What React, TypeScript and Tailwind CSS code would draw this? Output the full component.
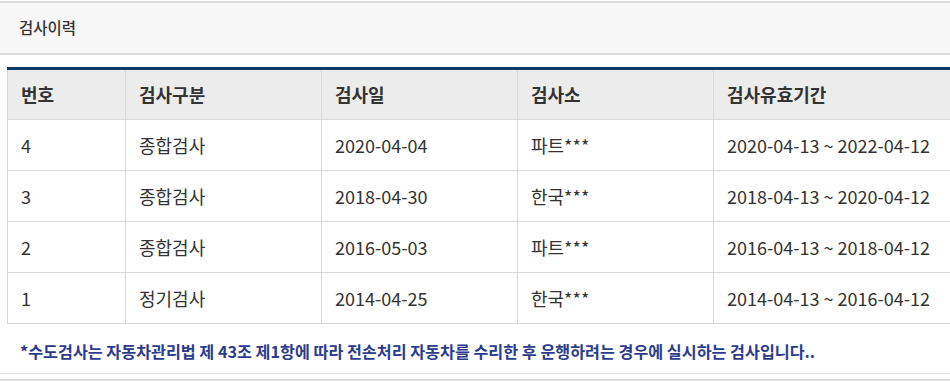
import React from 'react';

const rows = [
  { no: '4', type: '종합검사', date: '2020-04-04', place: '파트***', period: '2020-04-13 ~ 2022-04-12' },
  { no: '3', type: '종합검사', date: '2018-04-30', place: '한국***', period: '2018-04-13 ~ 2020-04-12' },
  { no: '2', type: '종합검사', date: '2016-05-03', place: '파트***', period: '2016-04-13 ~ 2018-04-12' },
  { no: '1', type: '정기검사', date: '2014-04-25', place: '한국***', period: '2014-04-13 ~ 2016-04-12' },
];

const headers = ['번호', '검사구분', '검사일', '검사소', '검사유효기간'];
const widths = ['w-[118px]', 'w-[196px]', 'w-[196px]', 'w-[196px]', ''];

export default function App() {
  return (
    <div
      className="w-[950px] h-[381px] overflow-hidden bg-white pt-px"
      style={{ fontFamily: '"Noto Sans CJK KR", "Noto Sans", sans-serif' }}
    >
      <div className="border-t-2 border-b-2 border-[#dddddd] bg-[#f7f7f7] h-[54px] flex items-center pl-[19px]">
        <h2 className="text-[15.5px] text-[#333] font-medium">검사이력</h2>
      </div>

      <div className="pl-[7px] pt-[12px]">
        <table className="w-full border-collapse border-t-[3px] border-[#0b3a6a] text-left">
          <thead>
            <tr className="bg-[#ececec] h-[51px]">
              {headers.map((h, i) => (
                <th
                  key={h}
                  className={`${widths[i]} border-l border-b border-[#d9d9d9] pl-[13px] text-[18px] font-bold text-[#333]`}
                >
                  {h}
                </th>
              ))}
            </tr>
          </thead>
          <tbody>
            {rows.map((r) => (
              <tr key={r.no} className="h-[51px]">
                {[r.no, r.type, r.date, r.place, r.period].map((c, i) => (
                  <td key={i} className="border-l border-b border-[#d9d9d9] pl-[13px] text-[18px] text-[#333]">
                    {c}
                  </td>
                ))}
              </tr>
            ))}
          </tbody>
        </table>
      </div>

      <div className="h-[50px] flex items-center pl-[20px] pt-[6px] border-b border-[#e2e2e2]">
        <p className="text-[16.2px] font-bold text-[#2b3c8e]">
          *수도검사는 자동차관리법 제 43조 제1항에 따라 전손처리 자동차를 수리한 후 운행하려는 경우에 실시하는 검사입니다..
        </p>
      </div>
      <div className="mt-[5px] border-t-[3px] border-[#dddddd]" />
    </div>
  );
}
